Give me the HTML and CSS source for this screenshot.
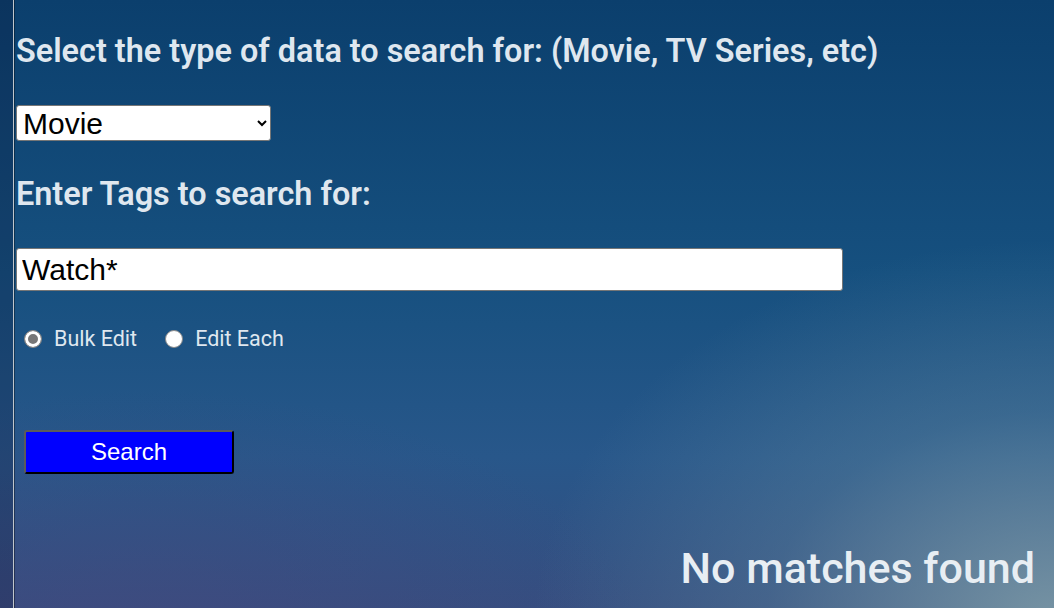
FILE: index.html
```html
<!DOCTYPE html>
<html>
<head>
<meta charset="utf-8">
<link rel="stylesheet" href="styles.css">
</head>
<body>
<div class="page">
  <div class="strip"></div>
  <main class="content">
    <h2 class="label">Select the type of data to search for: (Movie, TV Series, etc)</h2>
    <select class="type-select">
      <option>Movie</option>
      <option>TV Series</option>
    </select>
    <h2 class="label tags">Enter Tags to search for:</h2>
    <input class="tags-input" type="text" value="Watch*">
    <div class="radios">
      <label class="radio"><input type="radio" name="mode" checked><span>Bulk Edit</span></label>
      <label class="radio"><input type="radio" name="mode"><span>Edit Each</span></label>
    </div>
    <button class="search-btn">Search</button>
    <div class="result">No matches found</div>
  </main>
</div>
</body>
</html>
```
FILE: styles.css
```css
html, body {
  margin: 0;
  height: 100%;
}
body {
  font-family: Roboto, "Liberation Sans", sans-serif;
  overflow: hidden;
  background:
    radial-gradient(ellipse 520px 380px at 1054px 620px, rgba(130,160,170,0.85), rgba(100,140,160,0.35) 55%, rgba(60,110,150,0) 100%),
    radial-gradient(ellipse 500px 260px at 150px 650px, rgba(75,70,125,0.45), rgba(75,70,125,0) 100%),
    linear-gradient(180deg, #0b3f6d 0%, #16507f 45%, #28578a 75%, #354e80 100%);
}
.page {
  display: flex;
  height: 608px;
}
.strip {
  width: 13px;
  flex: none;
  background: rgba(10, 20, 50, 0.25);
  border-right: 1px solid #c0c6cc;
  box-shadow: 1px 0 0 rgba(0,0,0,0.35);
}
.content {
  flex: 1;
  padding: 0 0 0 2px;
  display: flex;
  flex-direction: column;
  align-items: flex-start;
  color: #dfe7ef;
}
.label {
  margin: 33px 0 0 0;
  font-size: 32.4px;
  font-weight: 600;
  line-height: 36px;
  letter-spacing: 0;
}
.label.tags {
  margin-top: 35px;
}
.type-select {
  margin-top: 36px;
  width: 255px;
  height: 36px;
  font-family: Arial, "Liberation Sans", sans-serif;
  font-size: 30px;
  color: #000;
  background: #fff;
  border: 1px solid #767676;
  border-radius: 3px;
  padding: 0 2px;
}
.tags-input {
  margin-top: 36px;
  width: 827px;
  height: 43px;
  box-sizing: border-box;
  font-family: Arial, "Liberation Sans", sans-serif;
  font-size: 30px;
  color: #000;
  background: #fff;
  border: 1px solid #767676;
  border-radius: 3px;
  padding: 0 5px;
}
.radios {
  margin-top: 35px;
  margin-left: 8px;
  display: flex;
  gap: 28px;
  font-size: 21.5px;
}
.radio {
  display: flex;
  align-items: center;
  gap: 12px;
}
.radio input {
  appearance: none;
  -webkit-appearance: none;
  margin: 0;
  width: 18px;
  height: 18px;
  border-radius: 50%;
  background: #fff;
  border: 1px solid #8a8a8a;
  box-sizing: border-box;
}
.radio input:checked {
  background: #777;
  box-shadow: inset 0 0 0 3px #fff;
}
.search-btn {
  margin-top: 79px;
  margin-left: 8px;
  width: 210px;
  height: 44px;
  background: #0000ff;
  color: #fff;
  font-family: Arial, "Liberation Sans", sans-serif;
  font-size: 24px;
  border: 2px solid;
  border-color: #5a5a5a #000 #000 #5a5a5a;
  border-radius: 3px;
}
.result {
  margin-top: auto;
  margin-bottom: 15px;
  align-self: flex-end;
  margin-right: 19px;
  font-size: 43px;
  font-weight: 500;
  color: #e8eef3;
}
```
